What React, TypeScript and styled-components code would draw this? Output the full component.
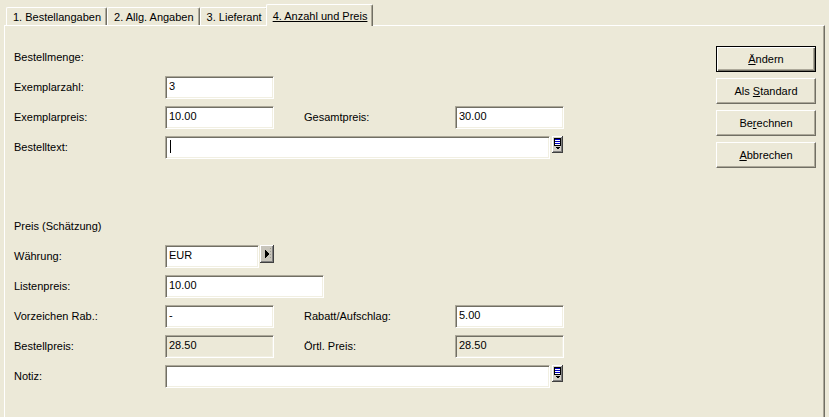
import styled, { createGlobalStyle } from "styled-components";

const GlobalStyle = createGlobalStyle`
    html, body {
        margin: 0;
        padding: 0;
        background: #ece9d8;
    }
    body {
        font-family: "Liberation Sans", Arial, sans-serif;
        font-size: 11px;
        color: #000;
    }
`;

const Window = styled.div`
    width: 829px;
    height: 417px;
    overflow: hidden;
    background: #ece9d8;
    display: flex;
    flex-direction: column;
`;

const TabStrip = styled.div`
    height: 26px;
    display: flex;
    align-items: flex-end;
    padding-left: 6px;
    position: relative;
    z-index: 1;
`;

const Tab = styled.div<{ $active?: boolean }>`
    box-sizing: border-box;
    height: ${props => (props.$active ? "22px" : "18px")};
    margin: ${props => (props.$active ? "0 0 -1px -2px" : "0")};
    padding: 0 5px 0 6px;
    display: flex;
    align-items: center;
    background: #ece9d8;
    border-top: 1px solid #fff;
    border-left: 1px solid #fff;
    border-right: 1px solid #716f64;
    box-shadow: inset -1px 0 #aca899;
    border-radius: 2px 2px 0 0;
    text-decoration: ${props => (props.$active ? "underline" : "none")};
    white-space: nowrap;
`;

const Panel = styled.div`
    box-sizing: border-box;
    width: 821px;
    height: 400px;
    margin-left: 4px;
    padding: 16px 0 0 9px;
    display: flex;
    border-top: 1px solid #fff;
    border-left: 1px solid #fff;
    border-right: 1px solid #716f64;
    box-shadow: inset -1px 0 #aca899;
`;

const Form = styled.div`
    flex: 1;
    display: flex;
    flex-direction: column;
`;

const Heading = styled.div`
    height: 30px;
    display: flex;
    align-items: center;
`;

const Row = styled.div`
    height: 30px;
    display: flex;
    align-items: center;
`;

const SectionGap = styled.div`
    height: 49px;
`;

const Label = styled.div<{ $second?: boolean }>`
    width: 151px;
    flex-shrink: 0;
    margin-left: ${props => (props.$second ? "30px" : "0")};
`;

const Field = styled.div<{ $width: number; $disabled?: boolean }>`
    box-sizing: border-box;
    width: ${props => props.$width}px;
    height: 23px;
    padding: 0 3px 3px;
    display: flex;
    align-items: center;
    flex-shrink: 0;
    background: ${props => (props.$disabled ? "#ece9d8" : "#fff")};
    border: 1px solid;
    border-color: #aca899 #fff #fff #aca899;
    box-shadow: inset 1px 1px #716f64, inset -1px -1px #f1efe2;
    white-space: nowrap;
`;

const Caret = styled.span`
    display: inline-block;
    width: 1px;
    height: 13px;
    margin: 2px 0 0 1px;
    background: #000;
`;

const SideButton = styled.div<{ $gap?: number }>`
    align-self: flex-start;
    margin-top: 4px;
    margin-left: ${props => props.$gap ?? 2}px;
    display: flex;
`;

const ButtonColumn = styled.div`
    width: 100px;
    margin: 4px 8px 0 0;
    display: flex;
    flex-direction: column;
    gap: 6px;
`;

const Button = styled.div<{ $default?: boolean }>`
    box-sizing: border-box;
    height: 26px;
    display: flex;
    align-items: center;
    justify-content: center;
    background: #ece9d8;
    border: 1px solid;
    border-color: ${props => (props.$default ? "#000" : "#fff #716f64 #716f64 #fff")};
    box-shadow: ${props =>
        props.$default
            ? "inset 1px 1px #fff, inset -1px -1px #716f64, inset -2px -2px #aca899"
            : "inset -1px -1px #aca899"};
`;

function MemoIcon() {
    return (
        <svg width="11" height="17" viewBox="0 0 11 17" shapeRendering="crispEdges">
            <rect x="0" y="0" width="11" height="17" fill="#404040" />
            <rect x="0" y="0" width="10" height="16" fill="#fff" />
            <rect x="1" y="1" width="9" height="15" fill="#808080" />
            <rect x="1" y="1" width="8" height="14" fill="#d4d0c8" />
            <rect x="2" y="2" width="7" height="8" fill="#000" />
            <rect x="3" y="3" width="5" height="6" fill="#fff" />
            <rect x="3" y="3" width="5" height="1" fill="#0000c8" />
            <rect x="3" y="5" width="5" height="1" fill="#0000c8" />
            <rect x="3" y="7" width="5" height="1" fill="#0000c8" />
            <polygon points="3,11 8,11 5.5,13.5" fill="#000" />
        </svg>
    );
}

function ArrowIcon() {
    return (
        <svg width="14" height="18" viewBox="0 0 14 18" shapeRendering="crispEdges">
            <rect x="0" y="0" width="14" height="18" fill="#404040" />
            <rect x="0" y="0" width="13" height="17" fill="#fff" />
            <rect x="1" y="1" width="12" height="16" fill="#808080" />
            <rect x="1" y="1" width="11" height="15" fill="#c8c5bb" />
            {[3, 6, 9, 12].map(y => (
                <rect key={y} x="10" y={y} width="1" height="1" fill="#9c9a92" />
            ))}
            <polygon points="5,5 5,13 9,9" fill="#000" />
        </svg>
    );
}

export default function App() {
    return (
        <>
            <GlobalStyle />
            <Window>
                <TabStrip>
                    <Tab>1. Bestellangaben</Tab>
                    <Tab>2. Allg. Angaben</Tab>
                    <Tab>3. Lieferant</Tab>
                    <Tab $active>4. Anzahl und Preis</Tab>
                </TabStrip>
                <Panel>
                    <Form>
                        <Heading>Bestellmenge:</Heading>
                        <Row>
                            <Label>Exemplarzahl:</Label>
                            <Field $width={109}>3</Field>
                        </Row>
                        <Row>
                            <Label>Exemplarpreis:</Label>
                            <Field $width={109}>10.00</Field>
                            <Label $second>Gesamtpreis:</Label>
                            <Field $width={109}>30.00</Field>
                        </Row>
                        <Row>
                            <Label>Bestelltext:</Label>
                            <Field $width={385}>
                                <Caret />
                            </Field>
                            <SideButton>
                                <MemoIcon />
                            </SideButton>
                        </Row>

                        <SectionGap />

                        <Heading>Preis (Schätzung)</Heading>
                        <Row>
                            <Label>Währung:</Label>
                            <Field $width={94}>EUR</Field>
                            <SideButton $gap={1}>
                                <ArrowIcon />
                            </SideButton>
                        </Row>
                        <Row>
                            <Label>Listenpreis:</Label>
                            <Field $width={159}>10.00</Field>
                        </Row>
                        <Row>
                            <Label>Vorzeichen Rab.:</Label>
                            <Field $width={109}>-</Field>
                            <Label $second>Rabatt/Aufschlag:</Label>
                            <Field $width={109}>5.00</Field>
                        </Row>
                        <Row>
                            <Label>Bestellpreis:</Label>
                            <Field $width={109} $disabled>
                                28.50
                            </Field>
                            <Label $second>Örtl. Preis:</Label>
                            <Field $width={109} $disabled>
                                28.50
                            </Field>
                        </Row>
                        <Row>
                            <Label>Notiz:</Label>
                            <Field $width={385} />
                            <SideButton>
                                <MemoIcon />
                            </SideButton>
                        </Row>
                    </Form>

                    <ButtonColumn>
                        <Button $default>
                            <span>
                                <u>Ä</u>ndern
                            </span>
                        </Button>
                        <Button>
                            <span>
                                Als <u>S</u>tandard
                            </span>
                        </Button>
                        <Button>
                            <span>
                                Be<u>r</u>echnen
                            </span>
                        </Button>
                        <Button>
                            <span>
                                <u>A</u>bbrechen
                            </span>
                        </Button>
                    </ButtonColumn>
                </Panel>
            </Window>
        </>
    );
}
